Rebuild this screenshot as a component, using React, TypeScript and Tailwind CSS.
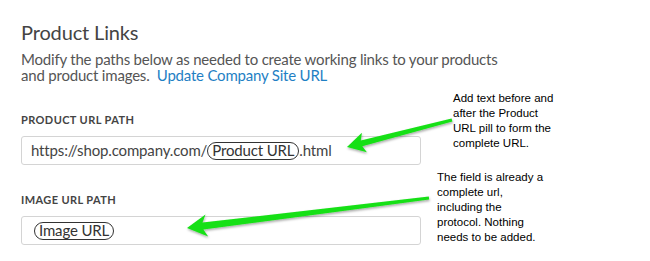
import React from 'react';

const ui = { fontFamily: 'Lato, "Open Sans", sans-serif' };
const note = { fontFamily: '"Liberation Sans", Arial, sans-serif' };

function Pill({ children }: { children: React.ReactNode }) {
  return (
    <span className="inline-flex h-[18px] items-center rounded-full border border-[#333] px-[4px] leading-none text-[#333]">
      {children}
    </span>
  );
}

function Field({ label, children }: { label: string; children: React.ReactNode }) {
  return (
    <div className="flex flex-col">
      <div className="text-[11px] font-bold tracking-[0.4px] text-[#444] leading-[14px]">{label}</div>
      <div className="mt-[9px] flex h-[29px] w-[400px] items-center rounded-[3px] border border-[#d4d4d4] px-[9px] text-[15px] tracking-[-0.15px] text-[#444]">
        {children}
      </div>
    </div>
  );
}

export default function App() {
  return (
    <div className="relative h-[261px] w-[650px] overflow-hidden bg-white" style={ui}>
      <div className="flex flex-col pl-[21px] pt-[20px]">
        <h2 className="text-[20px] leading-[24px] tracking-[-0.15px] text-[#444]">Product Links</h2>
        <div className="mt-[7px] flex flex-col text-[15px] leading-[16px] tracking-[-0.2px] text-[#555]">
          <span>Modify the paths below as needed to create working links to your products</span>
          <span>
            and product images.&nbsp; <a className="text-[#1f80c4]">Update Company Site URL</a>
          </span>
        </div>

        <div className="mt-[30px] flex flex-col gap-[28px]">
          <Field label="PRODUCT URL PATH">
            <span>https://shop.company.com/</span>
            <Pill>Product URL</Pill>
            <span>.html</span>
          </Field>
          <Field label="IMAGE URL PATH">
            <span className="ml-[3px]" />
            <Pill>Image URL</Pill>
          </Field>
        </div>
      </div>

      <div className="absolute left-[453px] top-[91px] text-[11.5px] leading-[15px] text-black" style={note}>
        Add text before and
        <br />
        after the Product
        <br />
        URL pill to form the
        <br />
        complete URL.
      </div>
      <div className="absolute left-[437px] top-[170px] text-[11.5px] leading-[15px] text-black" style={note}>
        The field is already a
        <br />
        complete url,
        <br />
        including the
        <br />
        protocol. Nothing
        <br />
        needs to be added.
      </div>

      <svg className="pointer-events-none absolute inset-0" width="650" height="261" viewBox="0 0 650 261">
        <defs>
          <filter id="sh" x="-10%" y="-50%" width="120%" height="200%">
            <feDropShadow dx="0.5" dy="1.5" stdDeviation="1" floodColor="#000" floodOpacity="0.35" />
          </filter>
        </defs>
        <g fill="#16e016" filter="url(#sh)">
          <polygon points="347,147 361.9,132.8 360.8,140.4 451.6,118.6 452.4,121.5 362.3,146.2 366.9,152.2" />
          <polygon points="187,228 205.5,214.6 202.5,222.6 428.8,196.5 429.2,199.5 203.3,229.5 208.2,236.5" />
        </g>
      </svg>
    </div>
  );
}
